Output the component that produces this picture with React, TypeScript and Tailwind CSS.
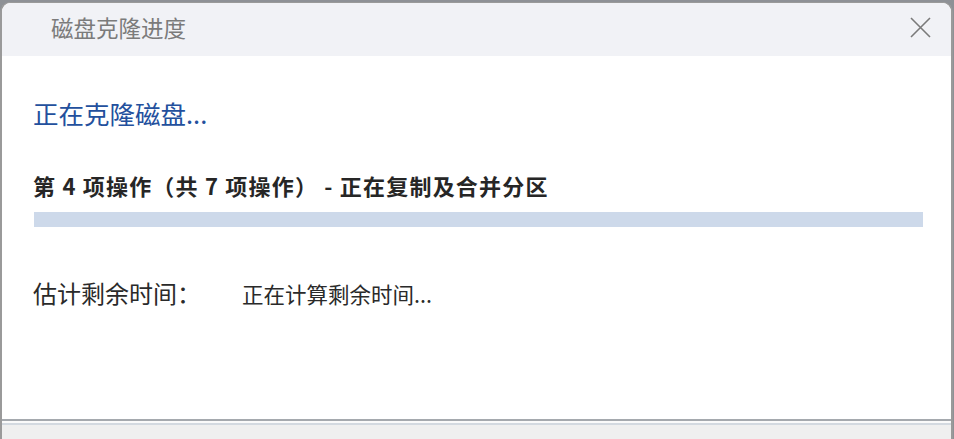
const font = "font-['Microsoft_YaHei','Noto_Sans_CJK_SC',sans-serif]";

export default function App() {
  return (
    <div className="h-[439px] w-[954px] overflow-hidden bg-[#8e9196]">
      <div
        className={`ml-0 mt-[2px] flex h-[437px] w-[953px] flex-col overflow-hidden rounded-t-[10px] border-x-2 border-t border-[#9a9a9a] bg-white ${font}`}
      >
        <div className="flex h-[53px] shrink-0 items-center justify-between bg-[#f1f2f6] pb-[5px] pl-[49px] pr-[20px]">
          <span className="text-[22.5px] leading-[30px] text-[#7b7b7b]">磁盘克隆进度</span>
          <svg width="21" height="21" viewBox="0 0 21 21" fill="none" stroke="#7a7a7a" strokeWidth="1.6">
            <path d="M1 1L20 20M20 1L1 20" />
          </svg>
        </div>
        <div className="flex flex-1 flex-col pl-[31px] pr-[28px]">
          <div className="mt-[40px] text-[25.5px] leading-[34px] text-[#23509d]">正在克隆磁盘...</div>
          <div className="mt-[41px] text-[22px] font-semibold leading-[28px] tracking-[1.2px] text-[#262626]">
            第 4 项操作（共 7 项操作） - 正在复制及合并分区
          </div>
          <div className="ml-[1px] mt-[13px] h-[15px] w-[889px] bg-[#cdd9ea]" />
          <div className="mt-[50px] flex items-baseline">
            <span className="w-[209px] text-[24px] leading-[32px] text-[#2a2a2a]">估计剩余时间：</span>
            <span className="text-[21.5px] text-[#2a2a2a]">正在计算剩余时间...</span>
          </div>
        </div>
        <div className="h-[2px] shrink-0 bg-[#a5a9ae]" />
        <div className="h-[2px] shrink-0 bg-[#fafafa]" />
        <div className="h-[2px] shrink-0 bg-[#d3d9e0]" />
        <div className="h-[14px] shrink-0 bg-[#efefef]" />
      </div>
    </div>
  );
}
